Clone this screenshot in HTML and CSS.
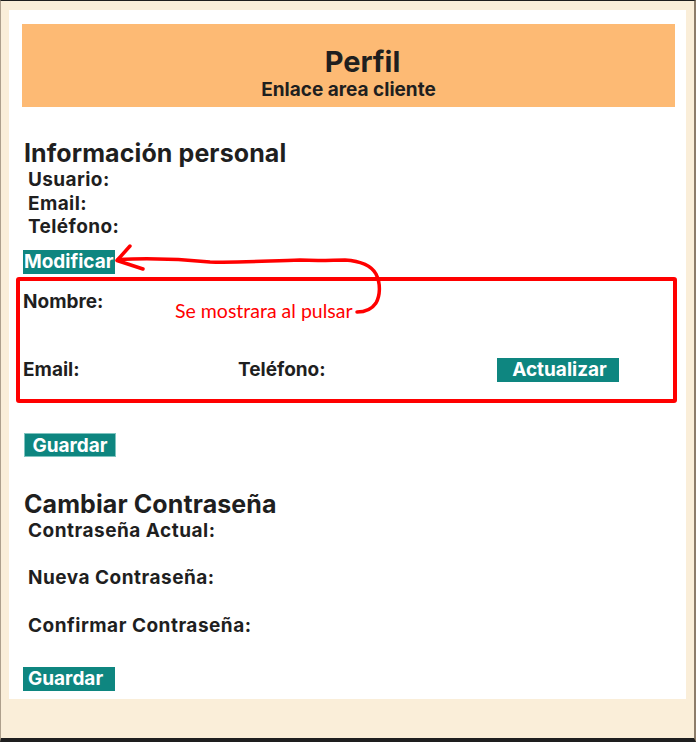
FILE: index.html
```html
<!DOCTYPE html>
<html lang="es">
<head>
<meta charset="utf-8">
<title>Perfil</title>
<link rel="stylesheet" href="styles.css">
</head>
<body>
<div class="frame">
  <main class="panel">
    <header class="banner">
      <h1 class="banner-title">Perfil</h1>
      <p class="banner-sub">Enlace area cliente</p>
    </header>

    <section class="info">
      <h2 class="section-title">Información personal</h2>
      <div class="field-list">
        <div class="field">Usuario:</div>
        <div class="field">Email:</div>
        <div class="field">Teléfono:</div>
      </div>
      <button class="btn btn-modificar" type="button">Modificar</button>
    </section>

    <div class="edit-box">
      <div class="edit-row-top">
        <span class="edit-label">Nombre:</span>
      </div>
      <div class="edit-row">
        <span class="edit-label">Email:</span>
        <span class="edit-label">Teléfono:</span>
        <button class="btn btn-actualizar" type="button">Actualizar</button>
      </div>
    </div>

    <button class="btn btn-guardar-1" type="button">Guardar</button>

    <section class="password">
      <h2 class="section-title">Cambiar Contraseña</h2>
      <div class="pw-field">Contraseña Actual:</div>
      <div class="pw-field">Nueva Contraseña:</div>
      <div class="pw-field">Confirmar Contraseña:</div>
      <button class="btn btn-guardar-2" type="button">Guardar</button>
    </section>
  </main>

  <span class="annotation">Se mostrara al pulsar</span>
  <svg class="arrow" width="696" height="742" viewBox="0 0 696 742" aria-hidden="true">
    <path d="M130 246 L117 260.5 L143 269" />
    <path d="M118 259.5 C150 258 180 259 210 262 C235 263 265 261 300 260 C320 261 333 260 345 260 C360 261 371 265 376 274 C381 284 380 296 376 303 C372 309 366 312 357 312" />
  </svg>
</div>
</body>
</html>
```

FILE: styles.css
```css
* {
  box-sizing: border-box;
}

html, body {
  margin: 0;
  padding: 0;
}

body {
  font-family: Inter, "Liberation Sans", sans-serif;
  color: #1f1f1f;
  background: #faeed9;
}

.frame {
  position: relative;
  width: 696px;
  height: 742px;
  background: #faeed9;
  border-top: 1px solid #1e1e1e;
  border-left: 1px solid #ad9f8c;
  border-right: 2px solid #8c7c6a;
  border-bottom: 4px solid #1e1e1e;
  padding: 9px 0 0 8px;
}

.panel {
  width: 677px;
  height: 689px;
  background: #ffffff;
  padding: 14px 0 0 14px;
}

.banner {
  width: 653px;
  height: 83px;
  margin-left: -1px;
  background: #fdba74;
  padding-top: 21px;
  text-align: center;
}

.banner-title {
  margin: 0;
  padding-left: 28px;
  font-size: 29px;
  line-height: 34px;
  font-weight: 700;
}

.banner-sub {
  margin: 0;
  font-size: 19px;
  line-height: 22px;
  font-weight: 700;
}

.section-title {
  margin: 0;
  padding-left: 1px;
  font-size: 25px;
  line-height: 30px;
  letter-spacing: 0.1px;
  font-weight: 700;
}

.info .section-title {
  margin-top: 31px;
}

.field-list {
  padding-left: 5px;
}

.field {
  font-size: 19px;
  line-height: 23.6px;
  letter-spacing: 0.4px;
  font-weight: 700;
}

.btn {
  display: block;
  border: 0;
  margin: 0;
  padding: 0;
  background: #0e8680;
  color: #ffffff;
  font-family: Inter, "Liberation Sans", sans-serif;
  font-size: 19px;
  line-height: 24px;
  height: 24px;
  font-weight: 700;
  text-align: left;
}

.btn-modificar {
  margin-top: 11px;
  width: 92px;
  padding-left: 1px;
}

.edit-box {
  width: 661px;
  height: 126px;
  margin: 3px 0 0 -7px;
  border: 4px solid #ff0000;
  border-radius: 3px;
  padding: 9px 0 0 3px;
}

.edit-label {
  font-size: 19px;
  line-height: 24px;
  font-weight: 700;
}

.edit-row-top {
  height: 24px;
  line-height: 24px;
}

.edit-row {
  display: grid;
  grid-template-columns: 215px 259px 122px;
  align-items: start;
  margin-top: 44px;
}

.btn-actualizar {
  width: 122px;
  text-align: center;
  padding-left: 3px;
}

.btn-guardar-1 {
  width: 92px;
  margin: 30px 0 0 1px;
  text-align: center;
  border: 1px solid #7fc4c0;
}

.password .section-title {
  margin-top: 32px;
}

.pw-field {
  padding-left: 5px;
  font-size: 19px;
  line-height: 24px;
  height: 24px;
  margin-bottom: 23.7px;
  letter-spacing: 0.5px;
  font-weight: 700;
}

.password .pw-field:last-of-type {
  margin-bottom: 0;
}

.btn-guardar-2 {
  width: 92px;
  margin-top: 29px;
  padding-left: 5px;
}

.annotation {
  position: absolute;
  left: 174px;
  top: 300px;
  font-family: Lato, "Open Sans", sans-serif;
  font-size: 19.5px;
  line-height: 19.5px;
  color: #ff0000;
  font-weight: 400;
}

.arrow {
  position: absolute;
  left: -1px;
  top: -1px;
  pointer-events: none;
}

.arrow path {
  fill: none;
  stroke: #ff0000;
  stroke-width: 3.5;
  stroke-linecap: round;
  stroke-linejoin: round;
}
```
